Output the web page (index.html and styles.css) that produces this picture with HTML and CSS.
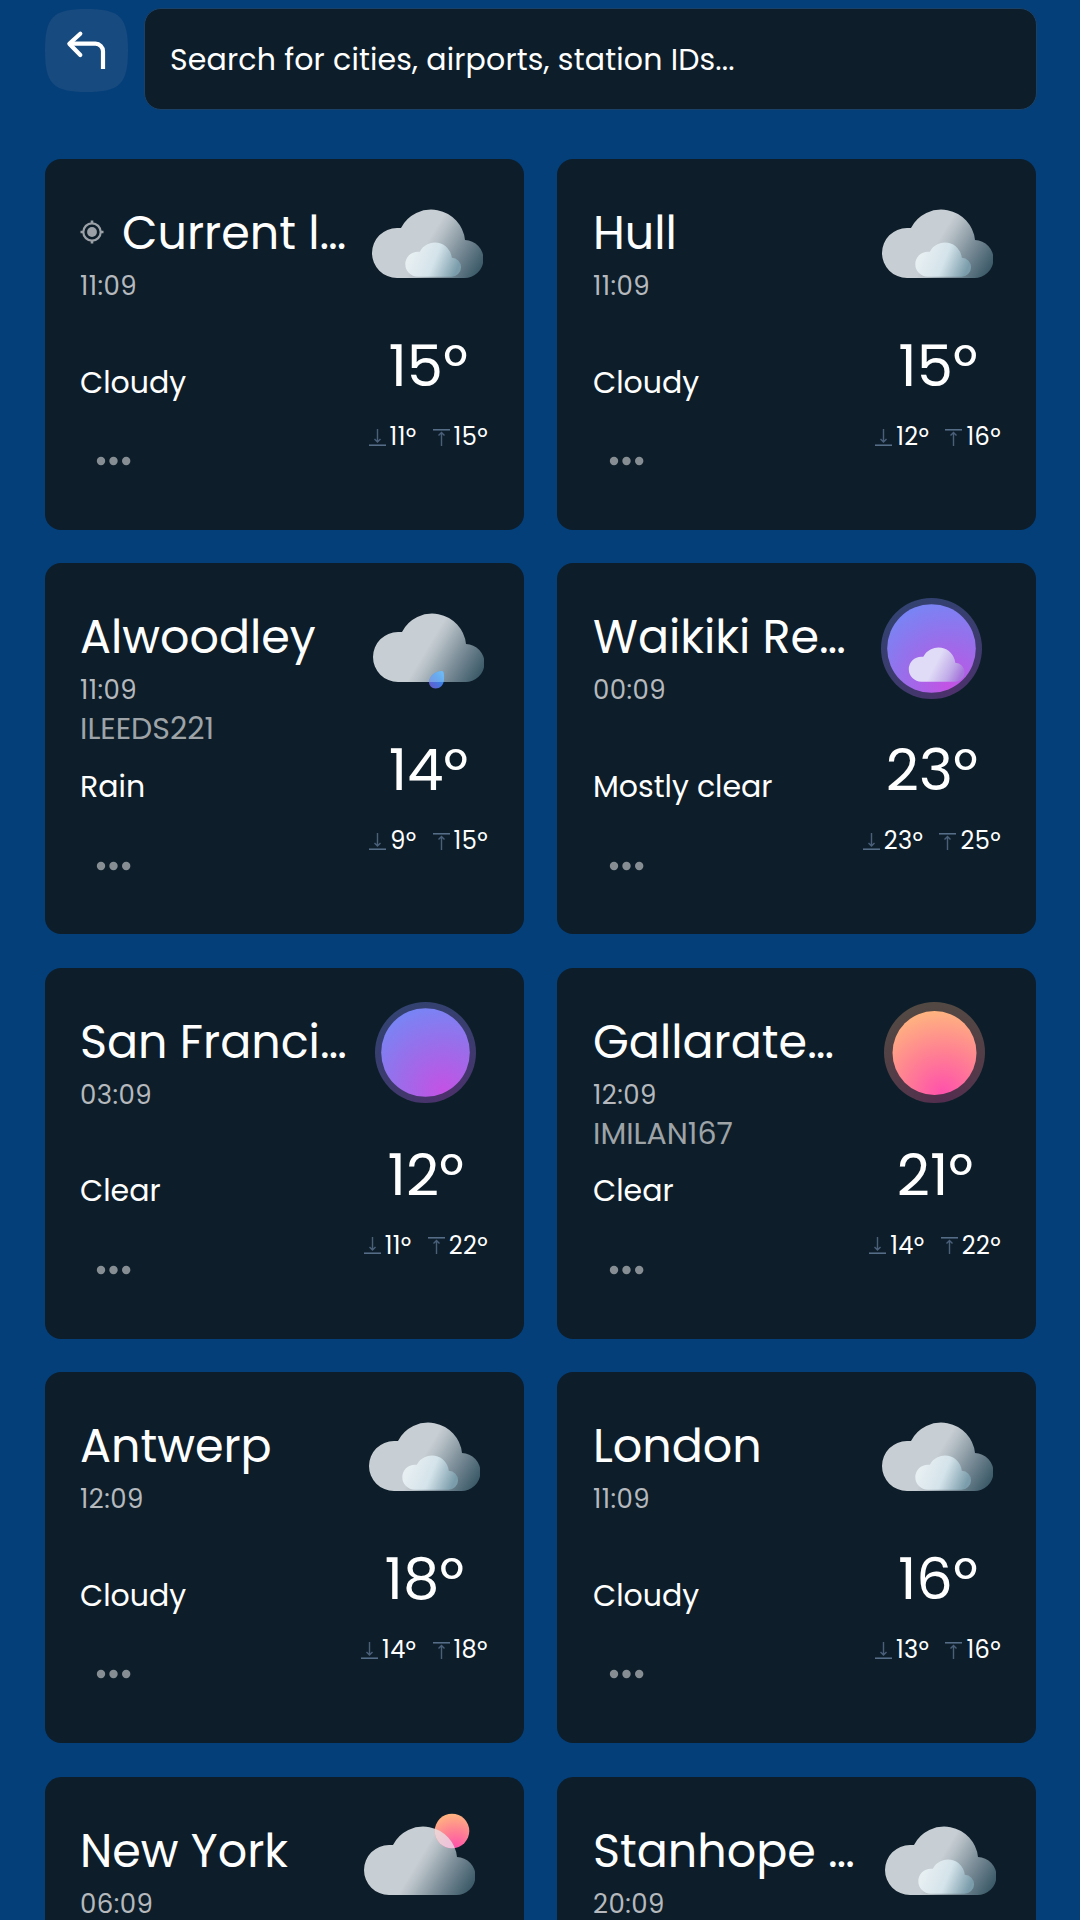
FILE: index.html
```html
<!DOCTYPE html>
<html lang="en">
<head>
<meta charset="utf-8">
<title>Weather locations</title>
<link rel="stylesheet" href="styles.css">
</head>
<body>
<svg class="defs" aria-hidden="true">
  <defs>
    <linearGradient id="g-cloud" gradientUnits="userSpaceOnUse" x1="50" y1="42" x2="100" y2="72">
      <stop offset="0" stop-color="#c7ced4"/><stop offset=".12" stop-color="#b9c2c8"/><stop offset=".55" stop-color="#7a8c97"/><stop offset="1" stop-color="#3d5b69"/>
    </linearGradient>
    <linearGradient id="g-cloud-small" gradientUnits="userSpaceOnUse" x1="10" y1="30" x2="98" y2="66">
      <stop offset="0" stop-color="#e7eff2"/><stop offset=".5" stop-color="#d4e3ea"/><stop offset="1" stop-color="#7b9dab"/>
    </linearGradient>
    <linearGradient id="g-cloud-night" gradientUnits="userSpaceOnUse" x1="49" y1="43" x2="98" y2="68">
      <stop offset="0" stop-color="#e0dbf6"/><stop offset=".6" stop-color="#c0abe8"/><stop offset="1" stop-color="#a778dc"/>
    </linearGradient>
    <radialGradient id="g-moon" cx=".7" cy=".93" r="1">
      <stop offset="0" stop-color="#c452e4"/><stop offset=".5" stop-color="#9c6cea"/><stop offset="1" stop-color="#7686f5"/>
    </radialGradient>
    <radialGradient id="g-sun" cx=".6" cy=".98" r="1">
      <stop offset="0" stop-color="#ff50ac"/><stop offset=".5" stop-color="#ff8192"/><stop offset="1" stop-color="#ffb57f"/>
    </radialGradient>
    <linearGradient id="g-drop" x1="0" y1="1" x2="1" y2="0">
      <stop offset="0" stop-color="#6a55c8"/><stop offset=".6" stop-color="#3b82e6"/><stop offset="1" stop-color="#4aa8f5"/>
    </linearGradient>
    <clipPath id="c-cloud"><path d="M25 84A25 25 0 0 1 25 34H29A34 34 0 0 1 93 46A19 19 0 0 1 92 84Z"/></clipPath>
    <path id="cloud" d="M25 69A25 25 0 0 1 25 19H29A34 34 0 0 1 93 31A19 19 0 0 1 92 69Z"/>
    <symbol id="i-cloudy" viewBox="0 0 111 101">
      <use href="#cloud" y="15" fill="url(#g-cloud)"/>
      <use href="#cloud" transform="translate(33.3 48.2) scale(.5)" fill="url(#g-cloud-small)"/>
    </symbol>
    <symbol id="i-rain" viewBox="0 0 111 101">
      <use href="#cloud" y="15" fill="url(#g-cloud)"/>
      <path d="M69 73C71 73 71.300 77 71 82C70.500 87 67 90.500 62.500 90.500C58.500 90.500 56 87.500 56 84C56 78.500 62 73 69 73Z" fill="url(#g-drop)"/>
      <path d="M69 73C71 73 71.300 77 71 82L70.700 84H56C56 78.500 62 73 69 73Z" fill="#9fdcf8" fill-opacity=".45"/>
    </symbol>
    <symbol id="i-partly" viewBox="0 0 111 101">
      <circle cx="88" cy="20" r="17.300" fill="url(#g-sun)"/>
      <use href="#cloud" y="15" fill="url(#g-cloud)"/>
      <g clip-path="url(#c-cloud)">
        <circle cx="88" cy="20" r="17.300" fill="url(#g-sun)"/>
        <circle cx="88" cy="20" r="17.300" fill="#e6e9f0" fill-opacity=".72"/>
      </g>
    </symbol>
    <symbol id="i-clear-night" viewBox="0 0 111 101">
      <circle cx="55.500" cy="50.500" r="50.500" fill="url(#g-moon)" fill-opacity=".35"/>
      <circle cx="55.500" cy="50.500" r="44.300" fill="url(#g-moon)"/>
    </symbol>
    <symbol id="i-mostly-clear-night" viewBox="0 0 111 101">
      <circle cx="55.500" cy="50.500" r="50.500" fill="url(#g-moon)" fill-opacity=".35"/>
      <circle cx="55.500" cy="50.500" r="44.300" fill="url(#g-moon)"/>
      <use href="#cloud" transform="translate(32.800 49.200) scale(.5)" fill="url(#g-cloud-night)"/>
    </symbol>
    <symbol id="i-clear-day" viewBox="0 0 111 101">
      <circle cx="55.500" cy="50.500" r="50.500" fill="url(#g-sun)" fill-opacity=".29"/>
      <circle cx="55.500" cy="51" r="42" fill="url(#g-sun)"/>
    </symbol>
    <symbol id="i-low" viewBox="0 0 17 17">
      <path d="M8.500 0V12.500M5.500 10L8.500 13L11.500 10" stroke-opacity=".75"/><path d="M0 16.200H17"/>
    </symbol>
    <symbol id="i-high" viewBox="0 0 17 17">
      <path d="M8.500 17V3.500M5.500 6.500L8.500 3.500L11.500 6.500" stroke-opacity=".75"/><path d="M0 .800H17"/>
    </symbol>
    <symbol id="i-more" viewBox="0 0 52 10">
      <circle cx="21" cy="5" r="4.200"/><circle cx="33.500" cy="5" r="4.200"/><circle cx="46.200" cy="5" r="4.200"/>
    </symbol>
  </defs>
</svg>

<main class="screen">
  <header class="topbar">
    <button class="back" aria-label="Back">
      <svg class="back-icon" viewBox="0 0 83 83">
        <path class="back-shape" d="M41.500 0C75 0 83 8 83 41.500S75 83 41.500 83S0 75 0 41.500S8 0 41.500 0Z"/>
        <path class="back-arrow" d="M35.300 24.700L24.300 34.700L35.300 46"/>
        <path class="back-stem" d="M25 34.700H50.500A7.500 7.500 0 0 1 58 42.200V60"/>
      </svg>
    </button>
    <div class="search">Search for cities, airports, station IDs...</div>
  </header>

  <section class="grid">
    <article class="card">
      <div class="info">
        <div class="place">
          <h2 class="name"><svg class="locate" viewBox="0 0 24 24"><circle cx="12" cy="12" r="8.700" fill="none" stroke="currentColor" stroke-width="2.200"/><circle cx="12" cy="12" r="4.900" fill="currentColor"/><path d="M12 .500V4M12 20V23.500M.500 12H4M20 12H23.500" stroke="currentColor" stroke-width="2.600"/></svg>Current l…</h2>
          <div class="time">11:09</div>
        </div>
        <div class="sky">Cloudy</div>
        <svg class="more"><use href="#i-more"/></svg>
      </div>
      <div class="weather">
        <svg class="icon"><use href="#i-cloudy"/></svg>
        <div class="temp">15º</div>
        <div class="range"><span class="limit"><svg class="arrow"><use href="#i-low"/></svg>11º</span><span class="limit"><svg class="arrow"><use href="#i-high"/></svg>15º</span></div>
      </div>
    </article>

    <article class="card">
      <div class="info">
        <div class="place">
          <h2 class="name">Hull</h2>
          <div class="time">11:09</div>
        </div>
        <div class="sky">Cloudy</div>
        <svg class="more"><use href="#i-more"/></svg>
      </div>
      <div class="weather">
        <svg class="icon"><use href="#i-cloudy"/></svg>
        <div class="temp">15º</div>
        <div class="range"><span class="limit"><svg class="arrow"><use href="#i-low"/></svg>12º</span><span class="limit"><svg class="arrow"><use href="#i-high"/></svg>16º</span></div>
      </div>
    </article>

    <article class="card">
      <div class="info">
        <div class="place">
          <h2 class="name">Alwoodley</h2>
          <div class="time">11:09</div>
          <div class="station">ILEEDS221</div>
        </div>
        <div class="sky">Rain</div>
        <svg class="more"><use href="#i-more"/></svg>
      </div>
      <div class="weather">
        <svg class="icon"><use href="#i-rain"/></svg>
        <div class="temp">14º</div>
        <div class="range"><span class="limit"><svg class="arrow"><use href="#i-low"/></svg>9º</span><span class="limit"><svg class="arrow"><use href="#i-high"/></svg>15º</span></div>
      </div>
    </article>

    <article class="card">
      <div class="info">
        <div class="place">
          <h2 class="name">Waikiki Re…</h2>
          <div class="time">00:09</div>
        </div>
        <div class="sky">Mostly clear</div>
        <svg class="more"><use href="#i-more"/></svg>
      </div>
      <div class="weather">
        <svg class="icon"><use href="#i-mostly-clear-night"/></svg>
        <div class="temp">23º</div>
        <div class="range"><span class="limit"><svg class="arrow"><use href="#i-low"/></svg>23º</span><span class="limit"><svg class="arrow"><use href="#i-high"/></svg>25º</span></div>
      </div>
    </article>

    <article class="card">
      <div class="info">
        <div class="place">
          <h2 class="name">San Franci…</h2>
          <div class="time">03:09</div>
        </div>
        <div class="sky">Clear</div>
        <svg class="more"><use href="#i-more"/></svg>
      </div>
      <div class="weather">
        <svg class="icon"><use href="#i-clear-night"/></svg>
        <div class="temp">12º</div>
        <div class="range"><span class="limit"><svg class="arrow"><use href="#i-low"/></svg>11º</span><span class="limit"><svg class="arrow"><use href="#i-high"/></svg>22º</span></div>
      </div>
    </article>

    <article class="card">
      <div class="info">
        <div class="place">
          <h2 class="name">Gallarate…</h2>
          <div class="time">12:09</div>
          <div class="station">IMILAN167</div>
        </div>
        <div class="sky">Clear</div>
        <svg class="more"><use href="#i-more"/></svg>
      </div>
      <div class="weather">
        <svg class="icon"><use href="#i-clear-day"/></svg>
        <div class="temp">21º</div>
        <div class="range"><span class="limit"><svg class="arrow"><use href="#i-low"/></svg>14º</span><span class="limit"><svg class="arrow"><use href="#i-high"/></svg>22º</span></div>
      </div>
    </article>

    <article class="card">
      <div class="info">
        <div class="place">
          <h2 class="name">Antwerp</h2>
          <div class="time">12:09</div>
        </div>
        <div class="sky">Cloudy</div>
        <svg class="more"><use href="#i-more"/></svg>
      </div>
      <div class="weather">
        <svg class="icon"><use href="#i-cloudy"/></svg>
        <div class="temp">18º</div>
        <div class="range"><span class="limit"><svg class="arrow"><use href="#i-low"/></svg>14º</span><span class="limit"><svg class="arrow"><use href="#i-high"/></svg>18º</span></div>
      </div>
    </article>

    <article class="card">
      <div class="info">
        <div class="place">
          <h2 class="name">London</h2>
          <div class="time">11:09</div>
        </div>
        <div class="sky">Cloudy</div>
        <svg class="more"><use href="#i-more"/></svg>
      </div>
      <div class="weather">
        <svg class="icon"><use href="#i-cloudy"/></svg>
        <div class="temp">16º</div>
        <div class="range"><span class="limit"><svg class="arrow"><use href="#i-low"/></svg>13º</span><span class="limit"><svg class="arrow"><use href="#i-high"/></svg>16º</span></div>
      </div>
    </article>

    <article class="card card-last">
      <div class="info">
        <div class="place">
          <h2 class="name">New York</h2>
          <div class="time">06:09</div>
        </div>
      </div>
      <div class="weather weather-wide">
        <svg class="icon"><use href="#i-partly"/></svg>
      </div>
    </article>

    <article class="card card-last">
      <div class="info">
        <div class="place">
          <h2 class="name">Stanhope …</h2>
          <div class="time">20:09</div>
        </div>
      </div>
      <div class="weather weather-narrow">
        <svg class="icon"><use href="#i-cloudy"/></svg>
      </div>
    </article>
  </section>
</main>
</body>
</html>
```
FILE: styles.css
```css
* {
  box-sizing: border-box;
}

body {
  margin: 0;
  background: #043f7a;
  color: #fff;
  font-family: Poppins, Inter, "Open Sans", sans-serif;
}

.defs {
  display: block;
  width: 0;
  height: 0;
}

.screen {
  width: 1080px;
  height: 1920px;
  overflow: hidden;
  padding: 8px 43px 0 45px;
}

.topbar {
  display: flex;
  gap: 16px;
  height: 102px;
}

.back {
  width: 83px;
  height: 83px;
  margin: 1px 0 0;
  padding: 0;
  border: 0;
  background: none;
}

.back-icon {
  display: block;
  width: 83px;
  height: 83px;
  fill: none;
  stroke: #fff;
  stroke-width: 4.2;
}

.back-shape {
  fill: #174a7e;
  stroke: none;
}

.back-arrow {
  stroke-linecap: round;
  stroke-linejoin: round;
}

.search {
  flex: 1;
  padding: 0 25px;
  border: 1px solid #1a4268;
  border-radius: 17px;
  background: #0d1e2a;
  font-size: 30px;
  line-height: 102px;
  letter-spacing: 0.15px;
}

.grid {
  display: grid;
  grid-template-columns: repeat(2, 479px);
  gap: 33.4px 33px;
  margin-top: 49px;
}

.card {
  display: flex;
  justify-content: space-between;
  height: 371px;
  padding: 35px 36px 0 35px;
  border-radius: 16px;
  background: #0d1e2a;
}

.card:nth-child(even) {
  padding: 35px 35px 0 36px;
}

.card-last {
  height: 180px;
}

.info {
  display: flex;
  flex-direction: column;
  padding-top: 9px;
}

.place {
  height: 159.5px;
}

.name {
  display: flex;
  align-items: center;
  gap: 18px;
  margin: 0 0 5px;
  font-size: 46px;
  font-weight: 400;
  line-height: 60px;
  white-space: nowrap;
}

.locate {
  width: 24px;
  height: 24px;
  margin-bottom: 3px;
  color: #9ba1a6;
}

.time {
  color: #b5b9bd;
  font-size: 26px;
  line-height: 36px;
  letter-spacing: 0.45px;
}

.station {
  margin-top: 1px;
  color: #9ea3a7;
  font-size: 30px;
  line-height: 40px;
}

.sky {
  font-size: 30px;
  line-height: 40px;
}

.more {
  width: 52px;
  height: 10px;
  margin-top: 53.7px;
  fill: #868e94;
}

.weather {
  display: flex;
  flex-direction: column;
  align-items: center;
}

.weather-wide {
  width: 136px;
}

.weather-narrow {
  width: 121px;
}

.icon {
  width: 111px;
  height: 101px;
  margin: -0.5px 1px 0.5px 0;
}

.temp {
  margin-top: 35px;
  font-size: 57.6px;
  line-height: 72px;
}

.range {
  display: flex;
  gap: 16px;
  margin-top: 18px;
  font-size: 24px;
  line-height: 34px;
  letter-spacing: 0.4px;
}

.limit {
  display: flex;
  align-items: center;
  gap: 4px;
}

.arrow {
  width: 17px;
  height: 17px;
  fill: none;
  stroke: #5f7694;
  stroke-width: 1.4;
}
```
